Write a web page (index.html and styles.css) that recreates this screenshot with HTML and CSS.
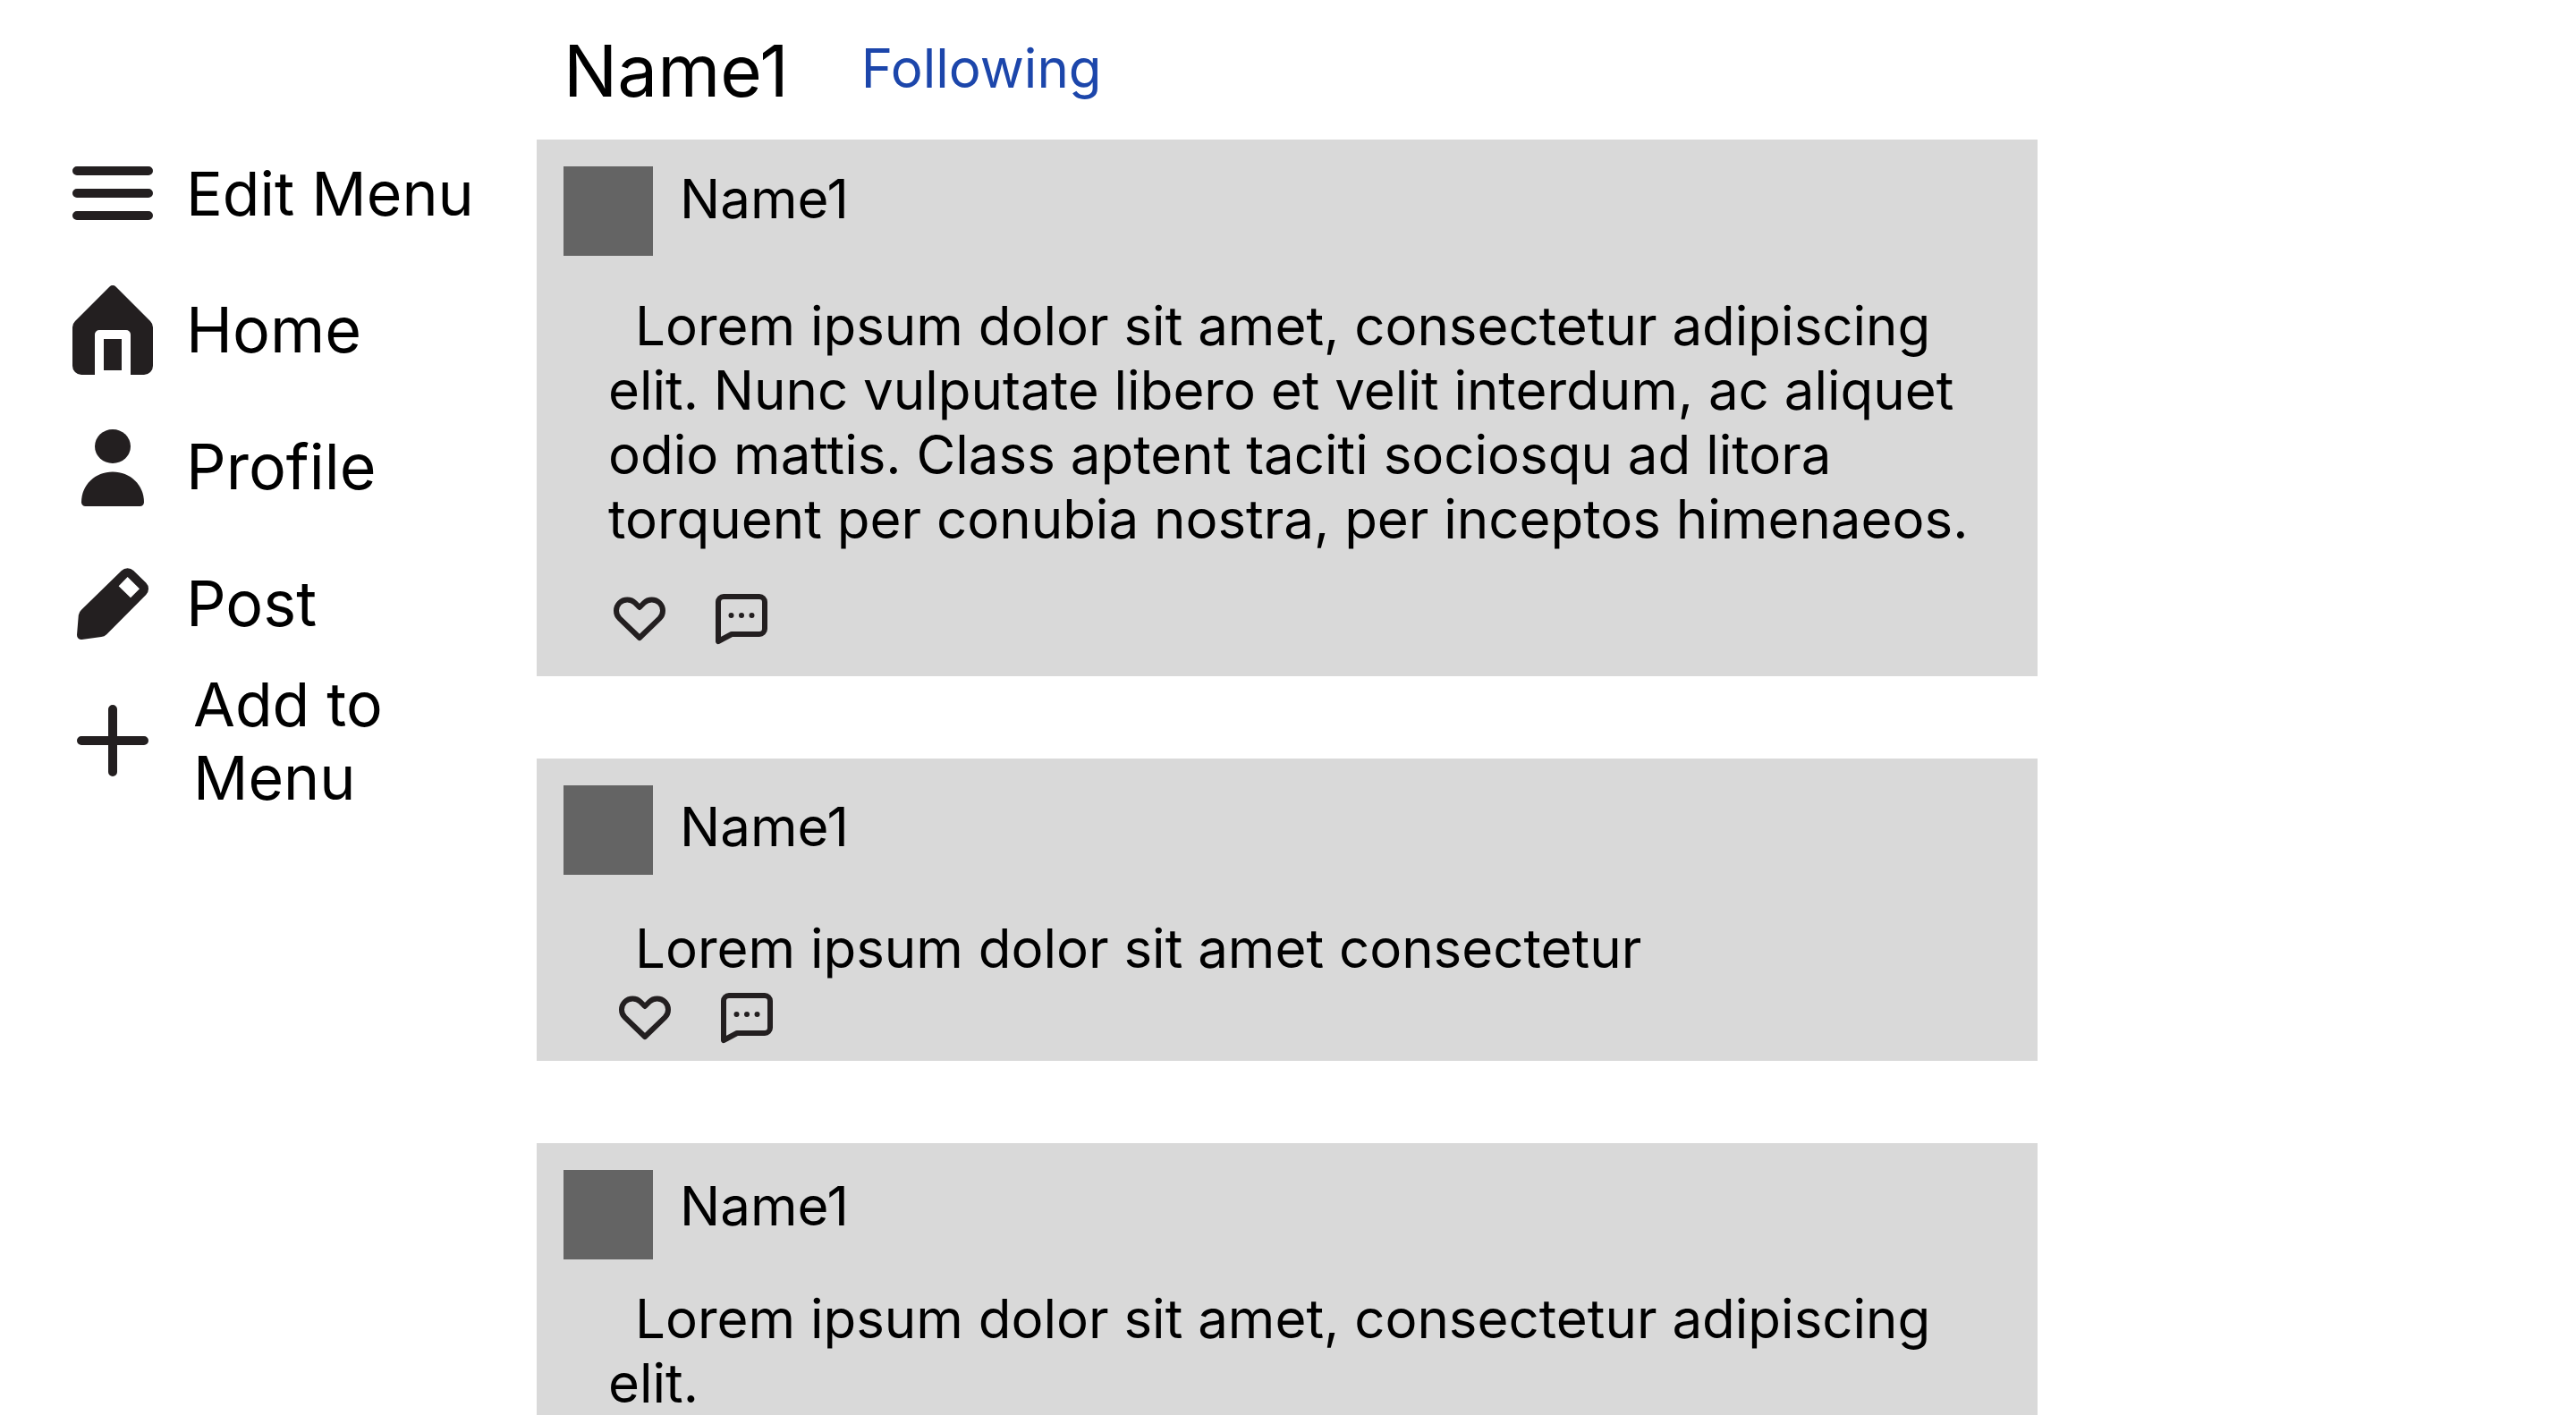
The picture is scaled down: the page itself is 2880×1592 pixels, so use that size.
FILE: index.html
```html
<!DOCTYPE html>
<html lang="en">
<head>
  <meta charset="utf-8">
  <meta name="viewport" content="width=device-width, initial-scale=1">
  <title>Name1</title>
  <link rel="stylesheet" href="styles.css">
</head>
<body>
  <svg class="sprite" aria-hidden="true">
    <symbol id="icon-heart" viewBox="0 0 72 72">
      <path d="M35 23l-5-5a12.3 12.3 0 0 0-17.400 17.400L35 57l22.400-21.600A12.3 12.3 0 0 0 40 18z"/>
    </symbol>
    <symbol id="icon-comment" viewBox="0 0 72 72">
      <path d="M9 61V17a6 6 0 0 1 6-6h40a6 6 0 0 1 6 6v30a6 6 0 0 1-6 6H24z"/>
      <path d="M23.500 32h.01M35 32h.01M46.500 32h.01"/>
    </symbol>
  </svg>

  <div class="page">
    <nav class="sidebar" aria-label="Main">
      <ul class="menu">
        <li>
          <button class="menu-item menu-item-compact" type="button">
            <svg class="menu-icon line" viewBox="0 0 24 24" aria-hidden="true"><path d="M4 7h16M4 12h16M4 17h16"/></svg>
            <span>Edit Menu</span>
          </button>
        </li>
        <li>
          <a class="menu-item" href="#home">
            <svg class="menu-icon" viewBox="0 0 24 24" aria-hidden="true"><path d="M11.3 2.3a1 1 0 0 1 1.4 0l7.7 7.7a2 2 0 0 1 .6 1.4V20a2 2 0 0 1-2 2h-3v-9a1 1 0 0 0-1-1H9a1 1 0 0 0-1 1v9H5a2 2 0 0 1-2-2v-8.600a2 2 0 0 1 .6-1.400zM10 14h4v7h-4z"/></svg>
            <span>Home</span>
          </a>
        </li>
        <li>
          <a class="menu-item" href="#profile">
            <svg class="menu-icon" viewBox="0 0 24 24" aria-hidden="true"><ellipse cx="12" cy="7.400" rx="4" ry="3.800"/><path d="M5 19.900C5 16 8.100 13.100 12 13.100s7 2.900 7 6.800a.9.9 0 0 1-.9.9H5.900a.9.9 0 0 1-.9-.9z"/></svg>
            <span>Profile</span>
          </a>
        </li>
        <li>
          <a class="menu-item" href="#post">
            <svg class="menu-icon" viewBox="0 0 24 24" aria-hidden="true"><path fill-rule="evenodd" d="M13.970 4.600a1.900 1.900 0 0 1 2.700 0l2.770 2.700a1.900 1.900 0 0 1 0 2.700l-8.800 8.870a2 2 0 0 1-1.200.55L5.100 20a1 1 0 0 1-1.100-1.050l.36-4.400A2 2 0 0 1 5 13.350zM15.330 6l-2 2.070L16 10.670l2-2z"/></svg>
            <span>Post</span>
          </a>
        </li>
        <li>
          <button class="menu-item menu-item-compact menu-item-add" type="button">
            <svg class="menu-icon line" viewBox="0 0 24 24" aria-hidden="true"><path d="M12 5v14M5 12h14"/></svg>
            <span>Add to Menu</span>
          </button>
        </li>
      </ul>
    </nav>

    <main class="feed">
      <header class="profile-header">
        <h1>Name1</h1>
        <button class="follow" type="button">Following</button>
      </header>

      <div class="posts">
        <article class="post">
          <header class="post-header">
            <div class="avatar"></div>
            <h2>Name1</h2>
          </header>
          <p class="post-text">Lorem ipsum dolor sit amet, consectetur adipiscing elit. Nunc vulputate libero et velit interdum, ac aliquet odio mattis. Class aptent taciti sociosqu ad litora torquent per conubia nostra, per inceptos himenaeos.</p>
          <div class="actions">
            <button type="button" aria-label="Like"><svg><use href="#icon-heart"/></svg></button>
            <button type="button" aria-label="Comment"><svg><use href="#icon-comment"/></svg></button>
          </div>
        </article>

        <article class="post post-short">
          <header class="post-header">
            <div class="avatar"></div>
            <h2>Name1</h2>
          </header>
          <p class="post-text">Lorem ipsum dolor sit amet consectetur</p>
          <div class="actions">
            <button type="button" aria-label="Like"><svg><use href="#icon-heart"/></svg></button>
            <button type="button" aria-label="Comment"><svg><use href="#icon-comment"/></svg></button>
          </div>
        </article>

        <article class="post post-preview">
          <header class="post-header">
            <div class="avatar"></div>
            <h2>Name1</h2>
          </header>
          <p class="post-text">Lorem ipsum dolor sit amet, consectetur adipiscing elit.</p>
        </article>
      </div>
    </main>
  </div>
</body>
</html>
```

FILE: styles.css
```css
* {
  box-sizing: border-box;
}

body {
  margin: 0;
  background: #fff;
  color: #000;
  font-family: Inter, "Liberation Sans", sans-serif;
  font-size: 60px;
  line-height: 72px;
}

h1,
h2,
p,
ul {
  margin: 0;
  padding: 0;
  font-weight: 400;
}

button {
  padding: 0;
  border: 0;
  background: none;
  color: inherit;
  font: inherit;
  text-align: left;
  cursor: pointer;
}

a {
  color: inherit;
  text-decoration: none;
}

.sprite {
  display: none;
}

.page {
  display: grid;
  grid-template-columns: 600px minmax(0, 1fr) 602px;
}

/* Sidebar */

.sidebar {
  padding: 156px 24px 0 66px;
}

.menu {
  display: grid;
  gap: 33px;
  list-style: none;
}

.menu-item {
  display: flex;
  align-items: center;
  gap: 22px;
  width: 100%;
  height: 120px;
  font-size: 70px;
  line-height: 84px;
}

.menu-item-compact {
  font-size: 68px;
  line-height: 82px;
}

.menu-item-add {
  gap: 30px;
  padding-right: 60px;
}

.menu-icon {
  flex: none;
  width: 120px;
  height: 120px;
  fill: #231f20;
}

.menu-icon.line {
  fill: none;
  stroke: #231f20;
  stroke-width: 2;
  stroke-linecap: round;
}

/* Feed */

.profile-header {
  display: flex;
  align-items: flex-start;
  gap: 81px;
  height: 156px;
  padding: 31px 30px 0;
}

.profile-header h1 {
  font-size: 80px;
  line-height: 96px;
}

.follow {
  margin-top: 9px;
  color: #1c46ab;
}

.posts {
  display: grid;
  gap: 92px;
  padding-bottom: 10px;
}

.post {
  --name-top: 0px;
  --text-top: 42px;
  padding: 30px 30px 28px;
  background: #d9d9d9;
}

.post-header {
  display: flex;
  align-items: flex-start;
  gap: 30px;
}

.post-header h2 {
  padding-top: var(--name-top);
  font-size: 60px;
}

.avatar {
  width: 100px;
  height: 100px;
  background: #646464;
}

.post-text {
  margin-top: var(--text-top);
  padding: 0 20px 0 50px;
  text-indent: 30px;
}

.actions {
  display: flex;
  gap: 42px;
  padding: 40px 50px 0;
}

.actions button {
  height: 72px;
}

.actions svg {
  display: block;
  width: 72px;
  height: 72px;
  fill: none;
  stroke: #231f20;
  stroke-width: 6;
  stroke-linecap: round;
  stroke-linejoin: round;
}

.post-short {
  --name-top: 10px;
  --text-top: 46px;
  padding-bottom: 12px;
}

.post-short .actions {
  padding: 6px 56px 0;
}

.post-preview {
  --name-top: 4px;
  --text-top: 30px;
  padding-bottom: 0;
}
```
